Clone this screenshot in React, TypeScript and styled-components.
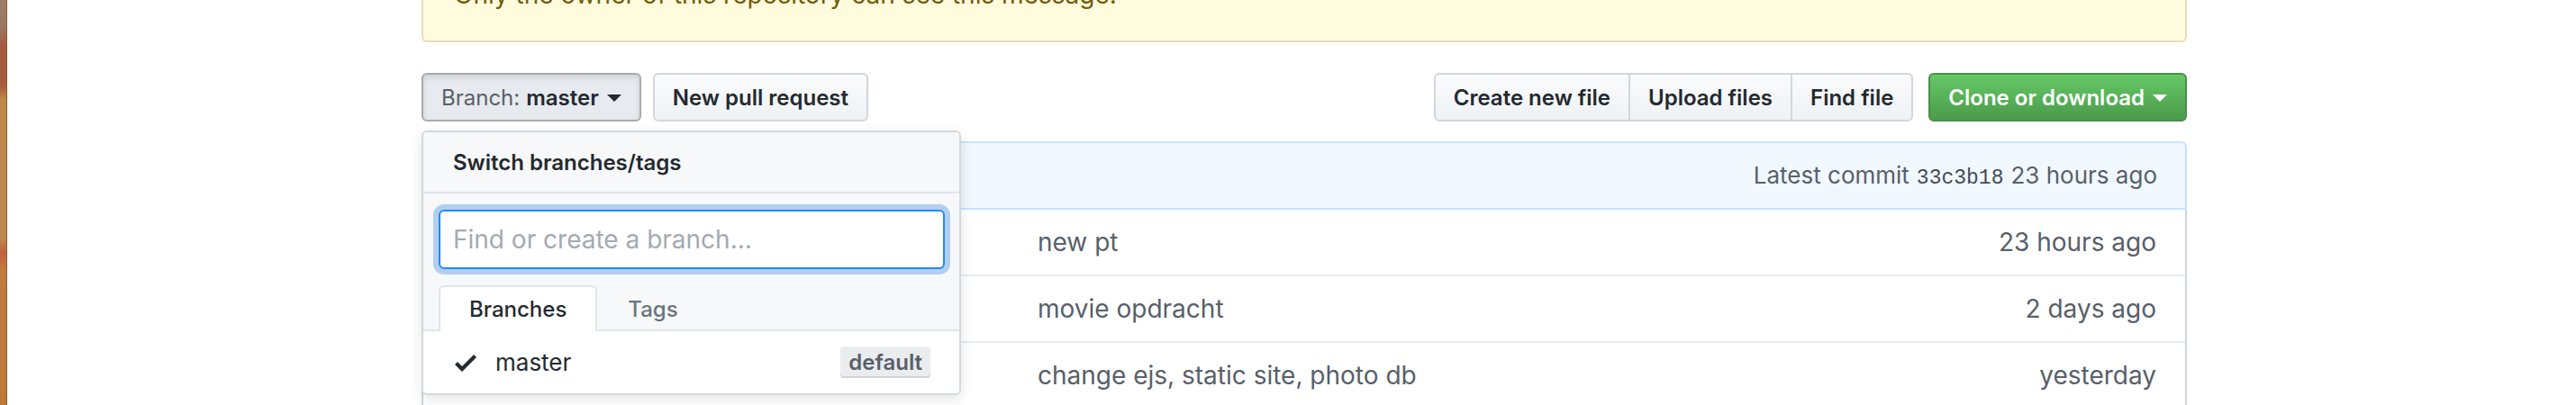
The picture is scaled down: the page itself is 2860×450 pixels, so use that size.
import React from 'react'
import styled, { createGlobalStyle, css } from 'styled-components'

const GlobalStyle = createGlobalStyle`
    html, body {
        margin: 0;
        padding: 0;
        background: #fff;
    }
    body {
        font-family: Inter, "Liberation Sans", "DejaVu Sans", sans-serif;
        color: #24292e;
    }
    * {
        box-sizing: border-box;
    }
`

const Page = styled.div`
    display: flex;
    width: 2860px;
    height: 450px;
    overflow: hidden;
`

// strip of desktop wallpaper peeking out at the window edge
const Wallpaper = styled.div`
    flex: none;
    width: 8px;
    border-right: 1px solid #8a5a2c;
    background: linear-gradient(180deg,
        #9e7e66 0px, #9a7660 30px, #a65c40 50px, #a85a3c 95px,
        #be8848 110px, #bd8a4c 265px, #c0623c 280px, #c26a3c 288px,
        #c07c3e 300px, #bc7a38 450px);
`

const Main = styled.div`
    flex: 1;
    padding-left: 460px;
`

const Container = styled.div`
    width: 1960px;
`

const Flash = styled.div`
    margin-top: -59px;
    padding: 30px 34px;
    border: 2px solid #e4ddbd;
    border-radius: 6px;
    background: #fffbdd;
    color: #735c0f;
    font-size: 28px;
    line-height: 42px;
`

const FileNav = styled.div`
    display: flex;
    justify-content: space-between;
    align-items: flex-start;
    margin-top: 34px;
    margin-bottom: 22px;
`

const Side = styled.div<{ $gap: number }>`
    display: flex;
    align-items: flex-start;
    gap: ${props => props.$gap}px;
`

const Btn = styled.button<{ $pressed?: boolean; $primary?: boolean }>`
    display: inline-flex;
    align-items: center;
    height: 54px;
    padding: 0 20px;
    font-family: inherit;
    font-size: 24px;
    font-weight: 600;
    color: #24292e;
    background: linear-gradient(-180deg, #fafbfc 0%, #eff3f6 90%);
    border: 2px solid #d4d6d9;
    border-radius: 6px;
    white-space: nowrap;
    ${props => props.$pressed && css`
        background: #e7eaee;
        border-color: #a7aaae;
        box-shadow: inset 0 3px 6px rgba(27, 31, 35, 0.12);
    `}
    ${props => props.$primary && css`
        color: #fff;
        background: linear-gradient(-180deg, #66c866 0%, #4c9d4c 95%);
        border-color: #4a8f4a;
    `}
`

const BtnGroup = styled.div`
    display: flex;
    & > ${Btn} {
        border-radius: 0;
        margin-left: -2px;
    }
    & > ${Btn}:first-child {
        border-radius: 6px 0 0 6px;
        margin-left: 0;
    }
    & > ${Btn}:last-child {
        border-radius: 0 6px 6px 0;
    }
`

const Muted = styled.span`
    color: #586069;
    font-weight: 400;
    margin-right: 7px;
`

const Caret = styled.span<{ $light?: boolean }>`
    display: inline-block;
    margin-left: 9px;
    margin-top: 2px;
    width: 0;
    height: 0;
    border-top: 8px solid ${props => props.$light ? '#fff' : '#24292e'};
    border-left: 8px solid transparent;
    border-right: 8px solid transparent;
`

const BranchWrap = styled.div`
    position: relative;
`

const Menu = styled.div`
    position: absolute;
    top: calc(100% + 10px);
    left: 0;
    width: 599px;
    background: #fff;
    border: 2px solid #d6d8db;
    border-radius: 6px;
    box-shadow: 0 4px 14px rgba(27, 31, 35, 0.12);
    overflow: hidden;
    z-index: 10;
`

const MenuHeader = styled.div`
    display: flex;
    align-items: center;
    height: 68px;
    padding: 0 33px;
    background: #f6f8fa;
    border-bottom: 2px solid #e1e4e8;
    font-size: 24px;
    font-weight: 600;
    color: #24292e;
`

const MenuFilters = styled.div`
    background: #f6f8fa;
    padding: 18px 16px 0 17px;
`

const FilterInput = styled.input`
    display: block;
    width: 100%;
    height: 66px;
    padding: 0 14px;
    font-family: inherit;
    font-size: 28px;
    color: #24292e;
    background: #fff;
    border: 2px solid #2188ff;
    border-radius: 6px;
    outline: none;
    box-shadow: 0 0 0 6px rgba(3, 102, 214, 0.28);
    &::placeholder {
        color: #a3aab1;
    }
`

const Tabs = styled.div`
    display: flex;
    margin: 18px -16px 0 -17px;
    padding-left: 17px;
    border-bottom: 2px solid #e1e4e8;
`

const Tab = styled.div<{ $active?: boolean }>`
    display: flex;
    align-items: center;
    height: 51px;
    padding: 0 32px;
    margin-bottom: -2px;
    font-size: 24px;
    font-weight: 500;
    color: ${props => props.$active ? '#24292e' : '#6a737d'};
    border: 2px solid transparent;
    border-bottom: 0;
    border-radius: 6px 6px 0 0;
    ${props => props.$active && css`
        background: #fff;
        border-color: #e1e4e8;
    `}
`

const MenuItem = styled.div`
    display: flex;
    align-items: center;
    height: 69px;
    padding: 0 32px 0 35px;
    font-size: 26px;
    color: #24292e;
`

const Check = styled.svg`
    flex: none;
    width: 24px;
    height: 32px;
    margin-right: 21px;
    fill: #24292e;
`

const Label = styled.span`
    margin-left: auto;
    height: 35px;
    line-height: 35px;
    padding: 0 9px;
    font-size: 24px;
    font-weight: 600;
    color: #586069;
    background: #eaecef;
    border-radius: 4px;
    box-shadow: inset 0 -2px 0 rgba(27, 31, 35, 0.12);
`

const CommitTease = styled.div`
    display: flex;
    justify-content: flex-end;
    align-items: center;
    height: 76px;
    padding: 0 31px;
    background: #f1f8ff;
    border: 2px solid #c8e1ff;
    border-radius: 6px 6px 0 0;
    font-size: 26px;
    color: #586069;
`

const Sha = styled.code`
    font-family: "Liberation Mono", "DejaVu Sans Mono", monospace;
    font-size: 23px;
    color: #444d56;
    margin: 0 8px;
`

const FileWrap = styled.div`
    border: 2px solid #d1d5da;
    border-top: 0;
    border-radius: 0 0 6px 6px;
`

const FileRow = styled.div`
    display: grid;
    grid-template-columns: 682px 1fr auto;
    align-items: center;
    height: 74px;
    padding-right: 32px;
    border-top: 2px solid #eaecef;
    font-size: 28px;
    color: #586069;
    &:first-child {
        height: 72px;
        border-top: 0;
    }
`

// file name column sits under the open branch menu
const FileCell = styled.span``

const files = [
    { message: 'new pt', age: '23 hours ago' },
    { message: 'movie opdracht', age: '2 days ago' },
    { message: 'change ejs, static site, photo db', age: 'yesterday' },
]

const App = () => {
    return (
        <Page>
            <GlobalStyle />
            <Wallpaper />
            <Main>
                <Container>
                    <Flash>Only the owner of this repository can see this message.</Flash>

                    <FileNav>
                        <Side $gap={13}>
                            <BranchWrap>
                                <Btn $pressed>
                                    <Muted>Branch:</Muted>master<Caret />
                                </Btn>
                                <Menu>
                                    <MenuHeader>Switch branches/tags</MenuHeader>
                                    <MenuFilters>
                                        <FilterInput placeholder='Find or create a branch…' readOnly />
                                        <Tabs>
                                            <Tab $active>Branches</Tab>
                                            <Tab>Tags</Tab>
                                        </Tabs>
                                    </MenuFilters>
                                    <MenuItem>
                                        <Check viewBox="0 0 12 16">
                                            <path fillRule="evenodd" d="M12 5l-8 8-4-4 1.5-1.5L4 10l6.5-6.5L12 5z" />
                                        </Check>
                                        master
                                        <Label>default</Label>
                                    </MenuItem>
                                </Menu>
                            </BranchWrap>
                            <Btn>New pull request</Btn>
                        </Side>
                        <Side $gap={17}>
                            <BtnGroup>
                                <Btn>Create new file</Btn>
                                <Btn>Upload files</Btn>
                                <Btn>Find file</Btn>
                            </BtnGroup>
                            <Btn $primary>Clone or download<Caret $light /></Btn>
                        </Side>
                    </FileNav>

                    <CommitTease>
                        <span>Latest commit<Sha>33c3b18</Sha>23 hours ago</span>
                    </CommitTease>
                    <FileWrap>
                        {files.map(file => (
                            <FileRow key={file.message}>
                                <FileCell />
                                <span>{file.message}</span>
                                <span>{file.age}</span>
                            </FileRow>
                        ))}
                    </FileWrap>
                </Container>
            </Main>
        </Page>
    )
}

export default App
